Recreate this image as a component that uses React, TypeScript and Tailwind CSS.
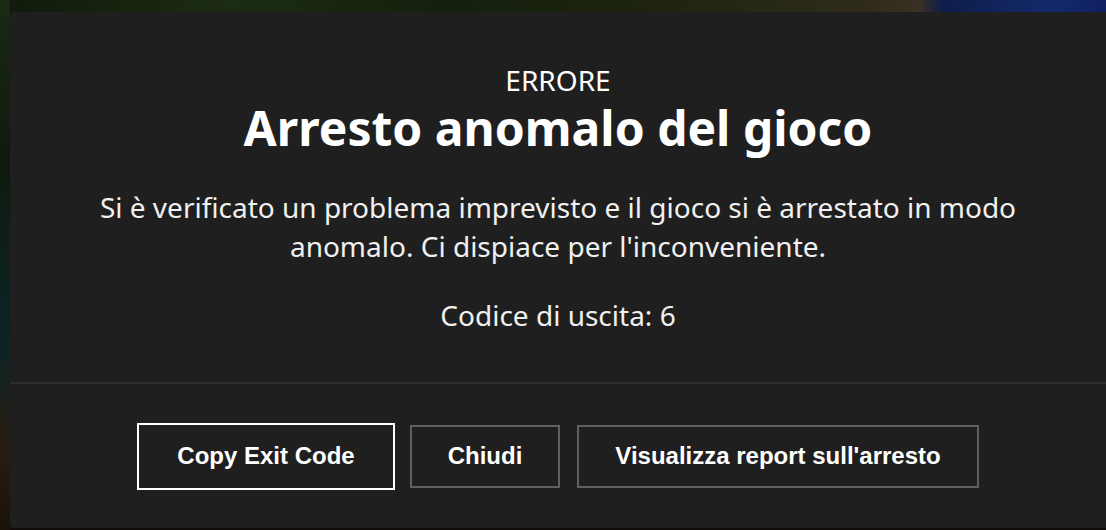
const buttons = [
  { label: "Copy Exit Code", focused: true },
  { label: "Chiudi", focused: false },
  { label: "Visualizza report sull'arresto", focused: false },
];

export default function App() {
  return (
    <div className="flex h-[530px] w-full overflow-hidden bg-[#0b0f0a]">
      {/* game scene peeking out on the left */}
      <div className="w-[10px] shrink-0 bg-[linear-gradient(180deg,#1a2a12_0%,#0f1a0e_30%,#0c2426_65%,#2a1c10_85%,#1a1208_100%)]" />

      <div className="flex min-w-0 flex-1 flex-col">
        {/* game scene peeking out on top */}
        <div className="h-[12px] shrink-0 bg-[linear-gradient(90deg,#111a0c_0%,#1c2c12_20%,#14200e_40%,#1f2410_60%,#2f2b1c_78%,#3a3024_83%,#0e1d4a_85%,#132a6a_95%,#0f2060_100%)]" />

        <div className="flex flex-1 flex-col rounded-l-[4px] bg-[#1f1f1f] font-['Noto_Sans',sans-serif] text-white">
          <div className="flex flex-1 flex-col items-center pt-[53px] text-center">
            <div className="text-[28px] leading-[30px]">ERRORE</div>
            <h1 className="mt-[1px] text-[48px] leading-[64px] font-bold">
              Arresto anomalo del gioco
            </h1>
            <p className="mt-[28px] max-w-[940px] text-[28px] leading-[39px] text-[#f0f0f0]">
              Si è verificato un problema imprevisto e il gioco si è arrestato in modo anomalo. Ci
              dispiace per l'inconveniente.
            </p>
            <p className="mt-[30px] text-[28px] leading-[39px] text-[#f0f0f0]">Codice di uscita: 6</p>
          </div>

          <div className="h-[2px] bg-[#2e2e2e]" />

          <div className="flex h-[144px] items-center justify-center gap-[17px] font-['Liberation_Sans',Arial,sans-serif]">
            {buttons.map(({ label, focused }) => (
              <button
                key={label}
                className={
                  focused
                    ? "ml-[2px] h-[63px] border-2 border-transparent px-[36px] text-[24px] font-bold text-white outline-2 outline-white"
                    : "h-[63px] border-2 border-[#5f5f5f] px-[36px] text-[24px] font-bold text-white"
                }
              >
                {label}
              </button>
            ))}
          </div>
        </div>

        <div className="h-[2px] shrink-0 bg-[#120d08]" />
      </div>
    </div>
  );
}
